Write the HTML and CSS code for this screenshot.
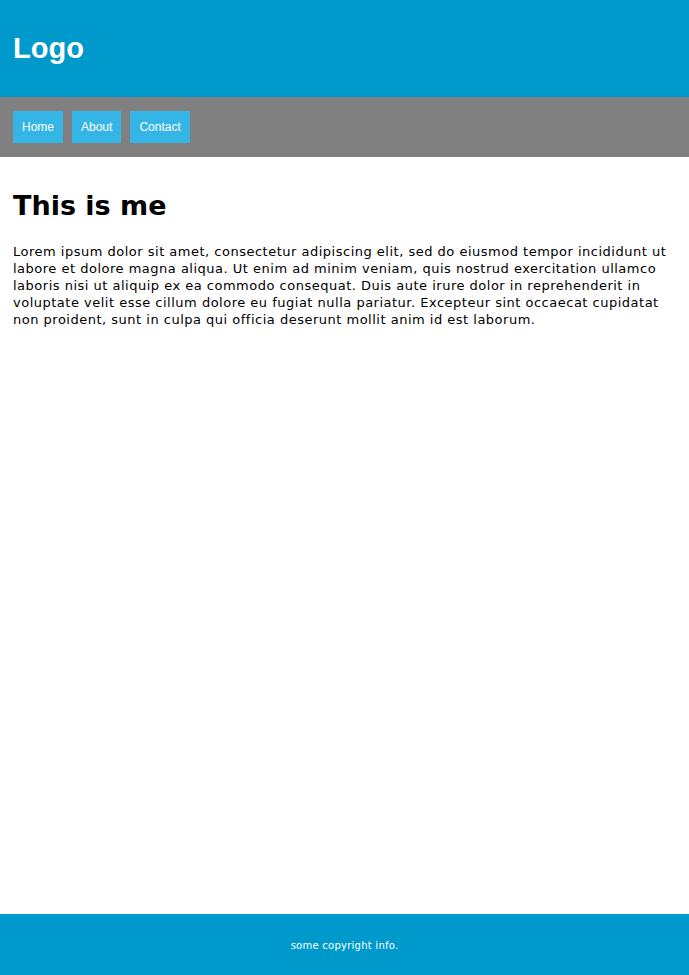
FILE: index.html
```html
<!DOCTYPE html>
<html>
<head>
<meta charset="utf-8">
<link rel="stylesheet" href="styles.css">
</head>
<body>
<div class="page">
  <header class="header"><div class="logo">Logo</div></header>
  <nav class="nav">
    <a class="nav-btn" href="#">Home</a>
    <a class="nav-btn" href="#">About</a>
    <a class="nav-btn" href="#">Contact</a>
  </nav>
  <main class="main">
    <h1 class="title">This is me</h1>
    <p class="text">Lorem ipsum dolor sit amet, consectetur adipiscing elit, sed do eiusmod tempor incididunt ut labore et dolore magna aliqua. Ut enim ad minim veniam, quis nostrud exercitation ullamco laboris nisi ut aliquip ex ea commodo consequat. Duis aute irure dolor in reprehenderit in voluptate velit esse cillum dolore eu fugiat nulla pariatur. Excepteur sint occaecat cupidatat non proident, sunt in culpa qui officia deserunt mollit anim id est laborum.</p>
  </main>
  <footer class="footer">some copyright info.</footer>
</div>
</body>
</html>
```
FILE: styles.css
```css
html, body { margin: 0; padding: 0; }
body { font-family: "DejaVu Sans", sans-serif; color: #000; background: #fff; }
.page { display: flex; flex-direction: column; min-height: 975px; }
.header { background: #0099cc; height: 97px; display: flex; align-items: center; padding: 0 13px; box-sizing: border-box; }
.logo { font-family: "Liberation Sans", Arial, sans-serif; font-weight: bold; font-size: 29px; color: #fff; }
.nav { background: #808080; height: 60px; box-sizing: border-box; padding: 14px 13px; display: flex; gap: 9px; }
.nav-btn { display: block; background: #35b5e5; color: #fff; text-decoration: none; font-family: "Liberation Sans", Arial, sans-serif; font-size: 12px; height: 32px; line-height: 32px; padding: 0 9px; }
.main { flex: 1; padding: 0 13px; }
.title { font-size: 27px; font-weight: bold; margin: 33px 0 21px; line-height: 32px; }
.text { font-size: 13px; line-height: 17px; margin: 0; letter-spacing: 0.5px; }
.footer { background: #0099cc; color: #fff; height: 61px; display: flex; align-items: center; justify-content: center; font-size: 10px; letter-spacing: 0.25px; padding-top: 2px; box-sizing: border-box; }
```
